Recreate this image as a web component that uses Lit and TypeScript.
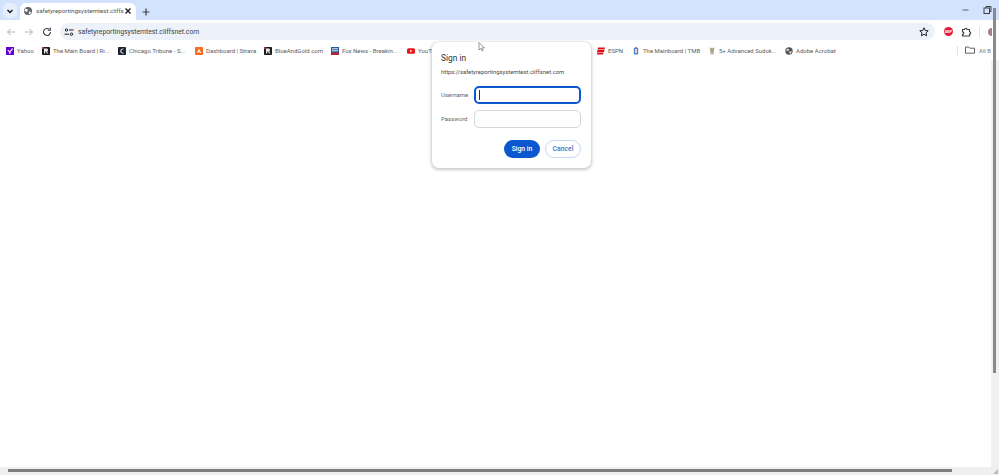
import { LitElement, html, css, svg } from "lit";
import { customElement } from "lit/decorators.js";

const icons: Record<string, unknown> = {
  yahoo: html`<svg viewBox="0 0 8 8"><rect width="8" height="8" fill="#6001d2"/><path d="M1.2 3h1.6l.9 1.4L5.8 1.6H7.4L4.4 5.2V7H3.2V5.2z" fill="#fff"/></svg>`,
  board: html`<svg viewBox="0 0 8 8"><rect width="8" height="8" rx=".8" fill="#1c1c1c"/><path d="M2 1.5h2.6a1.5 1.5 0 0 1 .5 2.9L6.4 6.5H5L3.9 4.6h-.7v1.9H2z" fill="#e8e8e8"/><rect x="0" y="0" width="2" height="2" fill="#a33"/></svg>`,
  chicago: html`<svg viewBox="0 0 8 8"><rect width="8" height="8" rx=".8" fill="#1c2333"/><path d="M5.6 1.4C3.6 1.2 2.2 2.5 2.2 4.1s1.4 2.8 3.4 2.5V5.7C4.3 5.9 3.4 5.2 3.4 4.1S4.3 2.1 5.6 2.3z" fill="#e8e8e8"/></svg>`,
  strava: html`<svg viewBox="0 0 8 8"><rect width="8" height="8" rx=".8" fill="#fc6a20"/><path d="M4 1.4 6.2 6H4.9L4 4.2 3.1 6H1.8z" fill="#fff"/></svg>`,
  fox: html`<svg viewBox="0 0 8 8"><rect width="8" height="8" fill="#2a5a9c"/><rect y="5.6" width="8" height="2.4" fill="#b8202e"/><path d="M1 1.2h6v1H1zm0 2h6v1H1z" fill="#dfe8f5"/></svg>`,
  yt: html`<svg viewBox="0 0 8 8"><rect y="1.2" width="8" height="5.6" rx="1.5" fill="#e8141c"/><path d="M3.2 2.8 5.4 4 3.2 5.2z" fill="#fff"/></svg>`,
  espn: html`<svg viewBox="0 0 8 8"><path d="M1 .6h7l-.5 2H.5zM.5 3.1h7L7 5H0zM.3 5.4h6.2L6 7.4H0z" fill="#d8111c"/></svg>`,
  tmb: html`<svg viewBox="0 0 8 8"><rect x="1.8" y=".8" width="4.4" height="6.8" rx=".8" fill="#4d88d6"/><rect x="3" y="2" width="2" height="4" fill="#f3d0d0"/><rect x="3.3" y="0" width="1.4" height="1.2" fill="#c44"/></svg>`,
  sudoku: html`<svg viewBox="0 0 8 8"><path d="M1.6.8h4.8L5.6 7.4H2.6z" fill="#b9b49a"/><path d="M2.4 2h3.2M2.6 3.4h2.8M2.8 4.8h2.4" stroke="#8a866e" stroke-width=".5"/></svg>`,
  globe: html`<svg viewBox="0 0 8 8"><circle cx="4" cy="4" r="3.7" fill="#555"/><path d="M2 1.6 4 2.4 3.4 4 1.4 3.6zM4.6 4.2 6.8 4.6 5.6 6.8 4.4 6z" fill="#eee"/></svg>`,
};

const marks = [
  { id: "yahoo", label: "Yahoo", w: 36 },
  { id: "board", label: "The Main Board | Ri...", w: 76 },
  { id: "chicago", label: "Chicago Tribune - S...", w: 77 },
  { id: "strava", label: "Dashboard | Strava", w: 69 },
  { id: "board", label: "BlueAndGold.com", w: 67 },
  { id: "fox", label: "Fox News - Breakin...", w: 76 },
  { id: "yt", label: "YouTube", w: 190 },
  { id: "espn", label: "ESPN", w: 35 },
  { id: "tmb", label: "The Mainboard | TMB", w: 76 },
  { id: "sudoku", label: "5+ Advanced Sudok...", w: 77 },
  { id: "globe", label: "Adobe Acrobat", w: 60 },
];

const stroke = (d: unknown, c = "#5f6368", w = 1.3) =>
  html`<svg class="ic" viewBox="0 0 12 12" fill="none" stroke=${c} stroke-width=${w}>${d}</svg>`;

@customElement("app-root")
export class AppRoot extends LitElement {
  static styles = css`
    :host { display: block; position: relative; width: 999px; height: 475px; overflow: hidden; background: #fff;
      font-family: Roboto, "Open Sans", sans-serif; color: #3c4043; }
    .ic { width: 12px; height: 12px; display: block; flex: none; }
    .tabs { height: 20px; background: #d3e3fd; display: flex; align-items: flex-end; box-sizing: border-box; }
    .menu { width: 14px; height: 15px; margin: 0 3px 2px 3px; border-radius: 5px; background: #e6eefb; display: grid; place-items: center; flex: none; }
    .tab { width: 116px; height: 17px; background: #fff; border-radius: 6px 6px 0 0; display: flex; align-items: center; padding: 0 2px 2px 2px; box-sizing: border-box; font-size: 6.2px; gap: 2px; flex: none; }
    .tab span { flex: 1; white-space: nowrap; color: #555; min-width: 0; }
    .plus { margin: 0 0 2px 4px; }
    .winctl { margin-left: auto; display: flex; align-items: center; gap: 9px; height: 20px; padding-right: 6px; }
    .toolbar { height: 21px; display: flex; align-items: center; background: #fff; padding-top: 2px; box-sizing: border-box; }
    .nav { display: flex; gap: 6px; padding-left: 5px; width: 60px; box-sizing: border-box; }
    .omni { width: 875px; height: 17px; background: #edf2fa; border-radius: 8.5px; display: flex; align-items: center; font-size: 6.8px; color: #3c4043; padding: 0 5px 0 3px; box-sizing: border-box; gap: 3px; flex: none; }
    .omni .url { flex: 1; white-space: nowrap; }
    .ext { display: flex; align-items: center; margin-left: 9px; gap: 7px; }
    .abp { width: 9px; height: 9px; border-radius: 50%; background: #e8193c; color: #fff; font: 700 3.5px "Liberation Sans", sans-serif; display: grid; place-items: center; }
    .sep { width: 1px; height: 10px; background: #d3e3fd; }
    .avatar { width: 4px; height: 8px; background: #a98080; border-radius: 4px 0 0 4px; margin-left: 1px; }
    .bar { height: 19px; display: flex; align-items: center; padding-left: 6px; font-size: 6px; color: #5c5c5c; white-space: nowrap; overflow: hidden; background: #fff; }
    .bm { display: flex; align-items: center; gap: 3px; flex: none; overflow: hidden; }
    .bm svg { width: 8px; height: 8px; flex: none; display: block; }
    .allbm { position: absolute; left: 957px; top: 44px; display: flex; align-items: center; gap: 3px; font-size: 6px; color: #777; white-space: nowrap; }
    .allbm .sep2 { width: 1px; height: 9px; background: #d3e3fd; margin-right: 3px; flex: none; }
    .dialog { position: absolute; left: 432px; top: 42px; width: 159px; height: 126px; background: #fff; border-radius: 7px; box-sizing: border-box;
      box-shadow: 0 1px 3px 1px rgba(60,64,67,.28); padding: 10px 10px 0 9px; z-index: 2; }
    .title { font-size: 8.4px; color: #333; line-height: 12px; }
    .origin { font-size: 5.85px; line-height: 9px; margin-top: 4px; color: #4a4a4a; white-space: nowrap; }
    .row { display: flex; align-items: center; margin-top: 6px; font-size: 6px; color: #666; }
    .row.first { margin-top: 9px; }
    .row label { width: 33px; flex: none; padding-bottom: 2px; }
    .input { width: 107px; height: 18px; border: 1px solid #d5d7da; border-radius: 5px; box-sizing: border-box; display: flex; align-items: center; padding-left: 4px; }
    .input.focus { border: 2px solid #0b57d0; padding-left: 3px; }
    .caret { width: 1px; height: 10px; background: #333; }
    .actions { display: flex; justify-content: flex-end; gap: 5px; margin-top: 12px; }
    .btn { height: 18px; border-radius: 9px; font-size: 6.8px; font-weight: 500; display: grid; place-items: center; box-sizing: border-box; }
    .primary { width: 36px; background: #0b57d0; color: #fff; }
    .secondary { width: 36px; background: #fff; color: #3d6fc4; border: 1px solid #c7d7f5; }
    .cursor { position: absolute; left: 478px; top: 42px; z-index: 3; width: 8px; height: 10px; }
    .vthumb { position: absolute; left: 993px; top: 8px; width: 3px; height: 365px; background: #8a8a8a; z-index: 1; }
    .vtrack { position: absolute; left: 991px; top: 60px; width: 8px; height: 415px; background: #f0f0f0; }
    .htrack { position: absolute; left: 0; top: 467px; width: 999px; height: 8px; background: #f0f0f0; }
    .hthumb { position: absolute; left: 8px; top: 469px; width: 944px; height: 3px; background: #7f7f7f; }
    .grip { position: absolute; right: 1px; bottom: 1px; width: 5px; height: 5px; }
  `;

  render() {
    return html`
      <div class="tabs">
        <div class="menu">${stroke(svg`<path d="M3.5 5 6 7.5 8.5 5"/>`, "#1f1f1f", 1.5)}</div>
        <div class="tab">
          ${stroke(svg`<circle cx="6" cy="6" r="4" fill="#5f6368" stroke="none"/><path d="M3.2 3.4 6 4.5 5 7 2.4 6zM7 6.5l2.2.4L8 9 6.8 8.8z" fill="#fff" stroke="none"/>`)}
          <span>safetyreportingsystemtest.cliffs</span>
          ${stroke(svg`<path d="M3.5 3.5l5 5M8.5 3.5l-5 5"/>`, "#1f1f1f", 1.4)}
        </div>
        <div class="plus">${stroke(svg`<path d="M6 2.5v7M2.5 6h7"/>`, "#3c4043", 1.2)}</div>
        <div class="winctl">
          ${stroke(svg`<path d="M2.5 6h6"/>`, "#5f6368", 1)}
          ${stroke(svg`<rect x="3" y="4" width="5.5" height="5.5"/><path d="M5 4V2.5h5v5H8.5"/>`, "#3c4043", 1)}
        </div>
      </div>
      <div class="toolbar">
        <div class="nav">
          ${stroke(svg`<path d="M10 6H2.5M5.5 3 2.5 6l3 3"/>`, "#b0b3b8", 1)}
          ${stroke(svg`<path d="M2 6h7.5M6.5 3l3 3-3 3"/>`, "#b0b3b8", 1)}
          ${stroke(svg`<path d="M9.5 6A3.5 3.5 0 1 1 8.4 3.4"/><path d="M9.3 1.6v2.6H6.8" />`, "#3c4043", 1.1)}
        </div>
        <div class="omni">
          ${stroke(svg`<circle cx="3.5" cy="4" r="1.2"/><path d="M6 4h4.5M1.5 8.2H6"/><circle cx="8.5" cy="8.2" r="1.2"/>`, "#1f1f1f", 1)}
          <div class="url">safetyreportingsystemtest.cliffsnet.com</div>
          ${stroke(svg`<path d="M6 1.8 7.2 4.5l3 .3-2.2 2 .6 3L6 8.3 3.4 9.8l.6-3-2.2-2 3-.3z"/>`, "#1f1f1f", 1)}
        </div>
        <div class="ext">
          <div class="abp">ABP</div>
          ${stroke(svg`<path d="M2.5 3.5h2a1.3 1.3 0 0 1 2.6 0h2.4v2.2a1.3 1.3 0 0 1 0 2.6v1.7h-7V8.5a1.3 1.3 0 0 0 0-2.6z"/>`, "#3c4043", 1.1)}
          <div class="sep"></div>
          <div class="avatar"></div>
        </div>
      </div>
      <div class="bar">
        ${marks.map(
          (m) => html`<div class="bm" style="width:${m.w}px">${icons[m.id]}<span>${m.label}</span></div>`
        )}
      </div>
      <div class="allbm">
        <div class="sep2"></div>
        ${stroke(svg`<path d="M1.5 3h3.2l1 1.2h4.8v5h-9z"/>`, "#5f6368", 1)}
        <span>All B</span>
      </div>
      <div class="dialog">
        <div class="title">Sign in</div>
        <div class="origin">https://safetyreportingsystemtest.cliffsnet.com</div>
        <div class="row first"><label>Username</label><div class="input focus"><div class="caret"></div></div></div>
        <div class="row"><label>Password</label><div class="input"></div></div>
        <div class="actions">
          <div class="btn primary">Sign in</div>
          <div class="btn secondary">Cancel</div>
        </div>
      </div>
      <svg class="cursor" viewBox="0 0 8 10"><path d="M1 .5v7.5l1.8-1.6 1.2 2.6 1.2-.6-1.2-2.5h2.4z" fill="#fff" stroke="#555" stroke-width=".6"/></svg>
      <div class="vtrack"></div>
      <div class="vthumb"></div>
      <div class="htrack"></div>
      <div class="hthumb"></div>
      <svg class="grip" viewBox="0 0 5 5"><path d="M5 0v5H0z" fill="#bbb"/></svg>
    `;
  }
}
